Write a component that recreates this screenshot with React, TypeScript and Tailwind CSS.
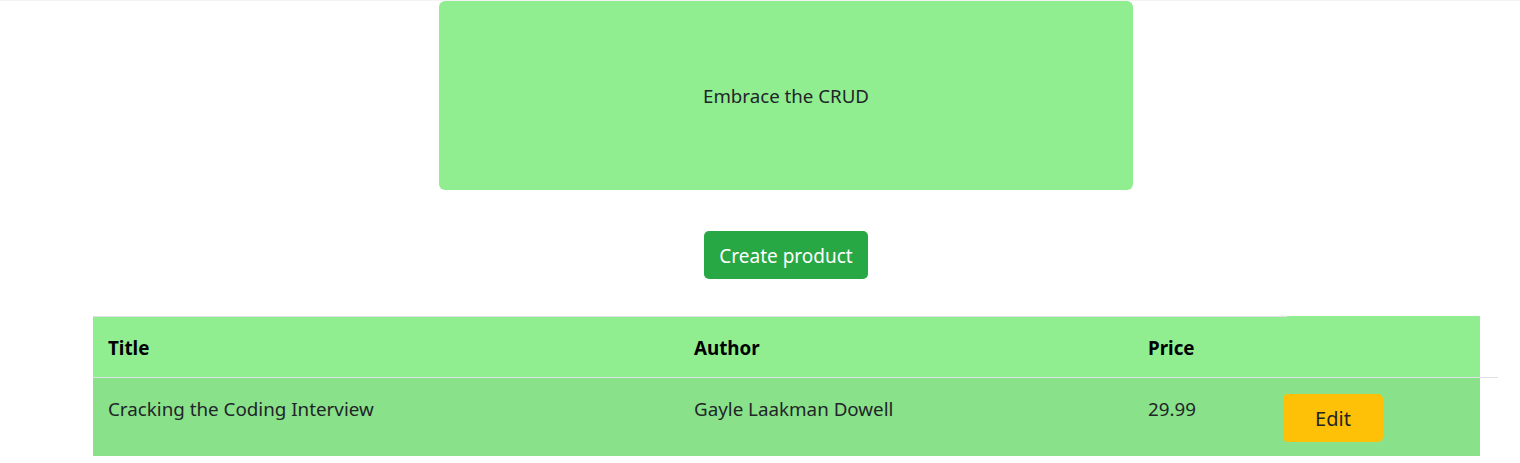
import React from "react";

export default function App() {
  return (
    <div
      className="w-[1520px] h-[463px] bg-white border-t border-[#f3f3f3] overflow-hidden text-[#212529]"
      style={{ fontFamily: '"Noto Sans", "Open Sans", sans-serif' }}
    >
      <div className="flex justify-center pl-[52px]">
        <div className="w-[694px] h-[189px] bg-[#90ee90] rounded-[6px] flex items-center justify-center text-[18.7px] pt-[2px]">
          Embrace the CRUD
        </div>
      </div>

      <div className="flex justify-center pl-[52px] mt-[41px]">
        <button className="w-[164px] h-[48px] bg-[#28a745] text-white text-[19px] rounded-[5px] flex items-center justify-center pt-[2px]">
          Create product
        </button>
      </div>

      <div className="ml-[93px] w-[1405px] mt-[37px] text-[18.8px]">
        <div className="flex border-b border-[#dee2e6] w-[1405px]">
          <div className="w-[1194px] flex bg-[#90ee90] border-t border-[#dee2e6] h-[61px] items-center font-bold text-black pt-[3px]">
            <div className="w-[585px] pl-[15px]">Title</div>
            <div className="w-[454px] pl-[16px]">Author</div>
            <div className="w-[155px] pl-[16px]">Price</div>
          </div>
          <div className="w-[193px] bg-[#90ee90] h-[61px]"></div>
        </div>
        <div className="flex w-[1387px] h-[78px] bg-[#89e189]">
          <div className="w-[585px] pl-[15px] pt-[17px]">Cracking the Coding Interview</div>
          <div className="w-[454px] pl-[16px] pt-[17px]">Gayle Laakman Dowell</div>
          <div className="w-[151px] pl-[16px] pt-[17px]">29.99</div>
          <div className="pt-[16px]">
            <button className="w-[100px] h-[48px] bg-[#ffc107] rounded-[5px] text-[20px] text-[#212529] flex items-center justify-center pt-[1px]">
              Edit
            </button>
          </div>
        </div>
      </div>
    </div>
  );
}
